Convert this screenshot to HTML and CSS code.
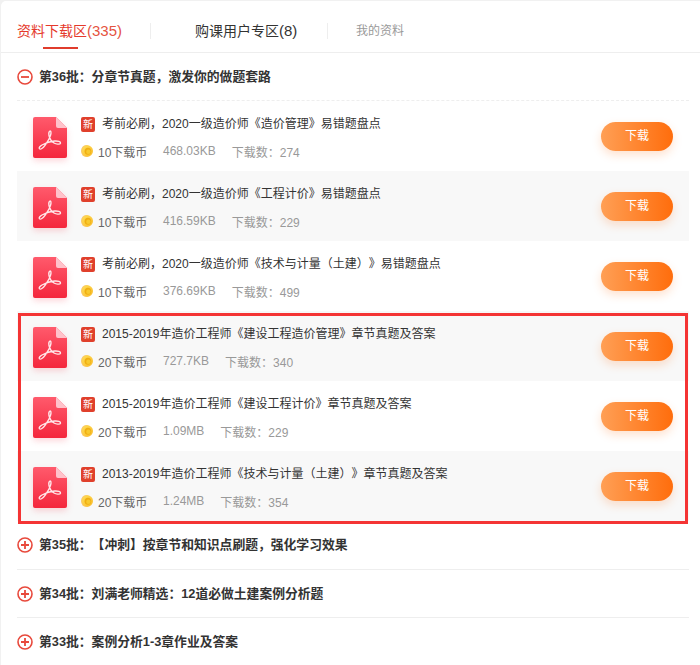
FILE: index.html
```html
<!DOCTYPE html>
<html lang="zh-CN">
<head>
<meta charset="utf-8">
<title>资料下载区</title>
<link rel="stylesheet" href="styles.css">
</head>
<body>
<svg class="defs" width="0" height="0" aria-hidden="true">
  <defs>
    <linearGradient id="pdfg" x1="0" y1="0" x2="0" y2="1"><stop offset="0" stop-color="#ff5a6c"/><stop offset="1" stop-color="#f4263c"/></linearGradient>
    <linearGradient id="coing" x1="0" y1="0" x2="1" y2="1"><stop offset="0" stop-color="#ffdf58"/><stop offset="1" stop-color="#f9b92a"/></linearGradient>
    <symbol id="pdf" viewBox="0 0 34 41">
      <path d="M2 0H23L34 11V39a2 2 0 0 1-2 2H2a2 2 0 0 1-2-2V2a2 2 0 0 1 2-2Z" fill="url(#pdfg)"/>
      <path d="M23 0L34 11H25a2 2 0 0 1-2-2Z" fill="#ffc2ca"/>
      <path d="M17.500 14c-1.500 0-2 2-1.500 4.500.6 3 2.500 6 5 7.500 2 1.200 6 1.800 6.500.2.4-1.400-2.500-2.500-6-2.200-4 .3-9 2-12.500 4-2 1.200-3.500 2.800-2.500 3.800 1 .9 3.500-.6 5.500-3.500 2.500-3.500 6-9 6-12.300 0-1.400-.2-2-.5-2Z" fill="none" stroke="#ffe8ea" stroke-width="1.400" stroke-linejoin="round"/>
    </symbol>
    <symbol id="coin" viewBox="0 0 12 12">
      <ellipse cx="5.200" cy="6" rx="5.200" ry="6" fill="#f9c765"/>
      <ellipse cx="6.500" cy="6" rx="5.500" ry="5.800" fill="url(#coing)"/>
      <ellipse cx="6.900" cy="6.300" rx="3.300" ry="3.500" fill="#efae12"/>
      <ellipse cx="7.400" cy="6.800" rx="2.200" ry="2.300" fill="#f8c92e"/>
    </symbol>
    <symbol id="minus" viewBox="0 0 16 16">
      <circle cx="8" cy="8" r="7" fill="none" stroke="#e8493c" stroke-width="1.600"/>
      <path d="M4 8H12" stroke="#e8493c" stroke-width="1.800"/>
    </symbol>
    <symbol id="plus" viewBox="0 0 16 16">
      <circle cx="8" cy="8" r="7" fill="none" stroke="#e8493c" stroke-width="1.600"/>
      <path d="M4 8H12M8 4V12" stroke="#e8493c" stroke-width="1.800"/>
    </symbol>
  </defs>
</svg>
<main class="card">
  <nav class="tabs">
    <a class="tab tab-active">资料下载区<span class="count count-red">(335)</span></a>
    <a class="tab tab-second">购课用户专区<span class="count">(8)</span></a>
    <a class="tab tab-muted">我的资料</a>
  </nav>
  <section class="content">
    <h2 class="batch batch-open"><svg class="toggle"><use href="#minus"/></svg>第36批：分章节真题，激发你的做题套路</h2>
    <div class="list">
      <div class="row">
        <svg class="pdf"><use href="#pdf"/></svg>
        <div class="info">
          <div class="title"><span class="new">新</span>考前必刷，2020一级造价师《造价管理》易错题盘点</div>
          <div class="meta"><span class="price"><svg class="coin"><use href="#coin"/></svg>10下载币</span><span class="size">468.03KB</span><span class="num">下载数：274</span></div>
        </div>
        <a class="btn">下载</a>
      </div>
      <div class="row">
        <svg class="pdf"><use href="#pdf"/></svg>
        <div class="info">
          <div class="title"><span class="new">新</span>考前必刷，2020一级造价师《工程计价》易错题盘点</div>
          <div class="meta"><span class="price"><svg class="coin"><use href="#coin"/></svg>10下载币</span><span class="size">416.59KB</span><span class="num">下载数：229</span></div>
        </div>
        <a class="btn">下载</a>
      </div>
      <div class="row">
        <svg class="pdf"><use href="#pdf"/></svg>
        <div class="info">
          <div class="title"><span class="new">新</span>考前必刷，2020一级造价师《技术与计量（土建）》易错题盘点</div>
          <div class="meta"><span class="price"><svg class="coin"><use href="#coin"/></svg>10下载币</span><span class="size">376.69KB</span><span class="num">下载数：499</span></div>
        </div>
        <a class="btn">下载</a>
      </div>
      <div class="row">
        <svg class="pdf"><use href="#pdf"/></svg>
        <div class="info">
          <div class="title"><span class="new">新</span>2015-2019年造价工程师《建设工程造价管理》章节真题及答案</div>
          <div class="meta"><span class="price"><svg class="coin"><use href="#coin"/></svg>20下载币</span><span class="size">727.7KB</span><span class="num">下载数：340</span></div>
        </div>
        <a class="btn">下载</a>
      </div>
      <div class="row">
        <svg class="pdf"><use href="#pdf"/></svg>
        <div class="info">
          <div class="title"><span class="new">新</span>2015-2019年造价工程师《建设工程计价》章节真题及答案</div>
          <div class="meta"><span class="price"><svg class="coin"><use href="#coin"/></svg>20下载币</span><span class="size">1.09MB</span><span class="num">下载数：229</span></div>
        </div>
        <a class="btn">下载</a>
      </div>
      <div class="row">
        <svg class="pdf"><use href="#pdf"/></svg>
        <div class="info">
          <div class="title"><span class="new">新</span>2013-2019年造价工程师《技术与计量（土建）》章节真题及答案</div>
          <div class="meta"><span class="price"><svg class="coin"><use href="#coin"/></svg>20下载币</span><span class="size">1.24MB</span><span class="num">下载数：354</span></div>
        </div>
        <a class="btn">下载</a>
      </div>
      <div class="frame"></div>
    </div>
    <h2 class="batch"><svg class="toggle"><use href="#plus"/></svg>第35批：【冲刺】按章节和知识点刷题，强化学习效果</h2>
    <h2 class="batch"><svg class="toggle"><use href="#plus"/></svg>第34批：刘满老师精选：12道必做土建案例分析题</h2>
    <h2 class="batch batch-last"><svg class="toggle"><use href="#plus"/></svg>第33批：案例分析1-3章作业及答案</h2>
  </section>
</main>
</body>
</html>
```
FILE: styles.css
```css
* { box-sizing: border-box; }
html, body { margin: 0; height: 100%; }
body {
  background: #f1f1f1;
  padding: 1px 0 0 1px;
  overflow: hidden;
  font-family: "Liberation Sans", "Noto Sans CJK SC", sans-serif;
  color: #333;
  text-spacing-trim: space-all;
}
.defs { position: absolute; }
.card {
  background: #fff;
  height: 664px;
  border-top-left-radius: 5px;
}
.tabs {
  display: flex;
  align-items: center;
  height: 52px;
  border-bottom: 1px solid #eee;
}
.tab {
  position: relative;
  display: block;
  font-size: 14px;
  line-height: 16px;
  margin-top: 8px;
  color: #333;
}
.tab-active {
  margin-left: 16px;
  width: 134px;
  border-right: 1px solid #eee;
  color: #e5392b;
}
.tab-active::after {
  content: "";
  position: absolute;
  left: 26px;
  bottom: -10px;
  width: 35px;
  height: 2px;
  background: #e03c2c;
}
.count { font-size: 15px; }
.count-red { color: #e5533f; }
.tab-second {
  width: 177px;
  padding-left: 44px;
  border-right: 1px solid #eee;
}
.tab-muted {
  padding-left: 28px;
  font-size: 12px;
  color: #999;
}
.content { padding: 0 11px 0 16px; }
.batch {
  display: flex;
  align-items: center;
  height: 48px;
  margin: 0;
  padding-bottom: 3px;
  font-size: 12.8px;
  font-weight: 700;
  color: #333;
  border-bottom: 1px solid #eee;
}
.list + .batch { height: 49px; }
.batch-open { border-bottom: 1px dashed #eee; }
.batch-last { border-bottom: 0; }
.toggle { width: 16px; height: 16px; margin: 3px 6px 0 0; flex: none; }
.list { position: relative; }
.row {
  display: flex;
  align-items: flex-start;
  height: 70px;
  padding: 16px 16px 0 16px;
}
.row:nth-child(even) { background: #f8f8f8; }
.pdf {
  width: 34px;
  height: 41px;
  flex: none;
  margin-right: 14px;
  filter: drop-shadow(0 3px 3px rgba(244, 38, 60, .18));
}
.info { flex: 1; min-width: 0; }
.title {
  display: flex;
  align-items: flex-start;
  height: 15px;
  font-size: 12px;
  line-height: 14px;
  color: #333;
  white-space: nowrap;
}
.new {
  display: block;
  width: 14px;
  height: 15px;
  margin-right: 7px;
  border-radius: 2px;
  background: #e0402c;
  color: #fff;
  font-size: 10px;
  line-height: 15px;
  text-align: center;
}
.meta {
  display: flex;
  align-items: center;
  margin-top: 10px;
  height: 18px;
  font-size: 12px;
  color: #999;
}
.price {
  display: flex;
  align-items: center;
  width: 82px;
  color: #666;
}
.coin { width: 12px; height: 12px; margin-right: 5px; flex: none; }
.size { margin-right: 16px; }
.btn {
  display: block;
  width: 72px;
  height: 29px;
  margin-top: 5px;
  flex: none;
  border-radius: 15px;
  background: linear-gradient(90deg, #ff9f55, #ff6d0c);
  box-shadow: 0 4px 10px rgba(255, 120, 30, .22);
  color: #fff;
  font-size: 12px;
  line-height: 28px;
  text-align: center;
}
.frame {
  position: absolute;
  left: 1px;
  top: 212px;
  width: 670px;
  height: 211px;
  border: 3px solid #f43434;
  pointer-events: none;
}
```
